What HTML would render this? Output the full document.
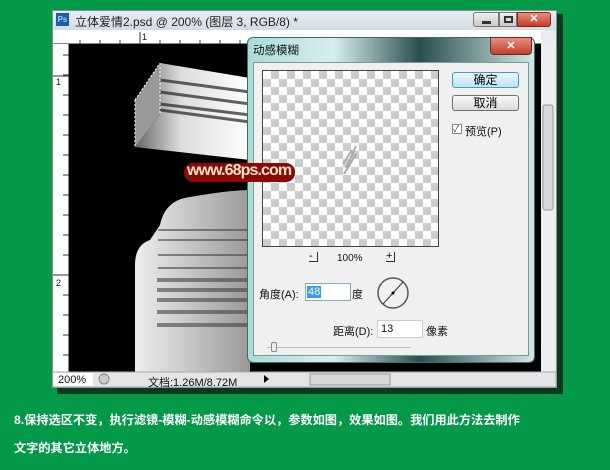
<!DOCTYPE html>
<html><head><meta charset="utf-8"><style>
*{margin:0;padding:0;box-sizing:border-box}
body{width:610px;height:470px;background:#029a48;position:relative;overflow:hidden;font-family:"Liberation Sans","Noto Sans CJK SC",sans-serif}
.a{position:absolute}
.t{font-size:11px;color:#111;white-space:nowrap}
.btn{position:absolute;border:1px solid #707070;border-radius:3px;background:linear-gradient(#f6f6f6,#dcdcdc);font-size:12px;text-align:center;line-height:14px;color:#000}
.cap{position:absolute;color:#fff;font-weight:bold;font-size:12.2px;letter-spacing:0;white-space:nowrap;font-family:"Liberation Sans","Noto Sans CJK SC",sans-serif}
</style></head><body>
<div class="a" style="left:57px;top:14px;width:506px;height:380px;background:#0b3a1f"></div>
<div class="a" style="left:52px;top:10px;width:505px;height:378px;background:#e9ecef;border:1px solid #8a8f96"></div>
<div class="a" style="left:53px;top:11px;width:503px;height:19px;background:linear-gradient(#e8eef5,#d3dbe4)"></div>
<div class="a" style="left:56px;top:13px;width:13px;height:13px;background:#1b5fa8;color:#9cd0ff;font-size:8px;font-weight:bold;line-height:13px;text-align:center">Ps</div>
<div class="a t" style="left:75px;top:13px;font-size:12px;color:#222">立体爱情2.psd @ 200% (图层 3, RGB/8) *</div>
<div class="a" style="left:473px;top:12px;width:26px;height:15px;border:1px solid #777;border-radius:3px 0 0 3px;background:linear-gradient(#f0f0f0,#c8c8c8)"><div class="a" style="left:8px;top:8px;width:9px;height:3px;background:#333"></div></div>
<div class="a" style="left:499px;top:12px;width:18px;height:15px;border:1px solid #777;background:linear-gradient(#f0f0f0,#c8c8c8)"><div class="a" style="left:4px;top:3px;width:9px;height:7px;border:2px solid #333"></div></div>
<div class="a" style="left:517px;top:12px;width:34px;height:15px;border:1px solid #7a2a20;border-radius:0 3px 3px 0;background:linear-gradient(#e98e7e,#c53c28);color:#fff;font-weight:bold;font-size:11px;text-align:center;line-height:13px">✕</div>
<div class="a" style="left:53px;top:30px;width:488px;height:14px;background:#fff;border-bottom:1px solid #888"></div>
<div class="a" style="left:53px;top:44px;width:16px;height:328px;background:#fff;border-right:1px solid #888"></div>
<div class="a t" style="left:142px;top:32px;font-size:9px">1</div>
<div class="a t" style="left:56px;top:77px;font-size:9px">1</div>
<div class="a t" style="left:56px;top:278px;font-size:9px">2</div>
<svg class="a" style="left:0;top:0" width="610" height="470">
<g stroke="#333" stroke-width="1">
<path d="M80 40v4M100 40v4M120 40v4M140 32v12M160 40v4M180 40v4M200 40v4M220 40v4M240 40v4"/>
<path d="M63 55h6M63 75h6M53 76h16M63 95h6M63 115h6M63 135h6M63 155h6M63 175h6M63 195h6M63 215h6M63 235h6M63 255h6M53 275h16M63 295h6M63 315h6M63 335h6M63 355h6"/>
</g>
<rect x="69" y="44" width="472" height="328" fill="#000"/>
<defs>
<linearGradient id="g1" x1="0" y1="0" x2="1" y2="0"><stop offset="0" stop-color="#666"/><stop offset=".4" stop-color="#ddd"/><stop offset="1" stop-color="#fff"/></linearGradient>
<linearGradient id="g2" x1="0" y1="0" x2="1" y2="0"><stop offset="0" stop-color="#eee"/><stop offset="1" stop-color="#999"/></linearGradient>
</defs>
<polygon points="160,63 250,78 250,160 135,147 160,114" fill="url(#g1)"/>
<g stroke="#222" stroke-width="3" opacity=".7"><path d="M160 80L250 92M160 92L250 104M160 104L250 115M160 110L250 122"/></g>
<polygon points="135,100 160,63 160,114 135,147" fill="#999"/>
<path d="M135 100L160 63M160 63V114M135 100V147" stroke="#fff" stroke-dasharray="2 2" fill="none"/>
<path d="M135 372V265Q135 245 150 240L160 225Q165 200 190 197Q230 190 250 190V372Z" fill="url(#g2)"/>
<g stroke="#444" opacity=".6"><path d="M158 230H250M158 240H250M158 255H250M158 268H250" stroke-width="2"/><path d="M157 280H250M157 290H250M157 300H250M157 312H250M157 325H250" stroke-width="4"/></g>
<rect x="541" y="44" width="14" height="328" fill="#eceef0"/>
<rect x="543" y="105" width="10" height="105" rx="2" fill="#d6d8da" stroke="#999"/>
<rect x="53" y="372" width="503" height="15" fill="#e3e5e7" stroke="#aaa"/>
<rect x="53" y="373" width="40" height="13" fill="#fff"/>
<circle cx="104" cy="379" r="5" fill="#ccc" stroke="#888"/>
<path d="M264 375l5 4-5 4z" fill="#000"/>
<rect x="310" y="374" width="80" height="11" fill="#d6d8da" stroke="#999"/>
</svg>
<div class="a t" style="left:58px;top:374px">200%</div>
<div class="a t" style="left:148px;top:374px">文档:1.26M/8.72M</div>
<div class="a" style="left:247px;top:37px;width:288px;height:326px;border:1px solid #3a6e6e;border-radius:6px;background:linear-gradient(90deg,#a8dcd8,#d8eeee 30%,#2a4e50 60%,#cfe8e6)"></div>
<div class="a" style="left:253px;top:62px;width:276px;height:294px;background:#f0f0f0;border:1px solid #7a9a9a"></div>
<div class="a t" style="left:253px;top:42px;font-size:11.5px">动感模糊</div>
<div class="a" style="left:490px;top:37px;width:42px;height:18px;border:1px solid #6a2a20;border-radius:0 0 4px 4px;background:linear-gradient(#e98e7e,#c0402a);color:#fff;font-weight:bold;font-size:11px;text-align:center;line-height:16px">✕</div>
<div class="a" style="left:262px;top:70px;width:177px;height:177px;border:1px solid #444;background-color:#fff;background-image:linear-gradient(45deg,#ccc 25%,transparent 25%,transparent 75%,#ccc 75%),linear-gradient(45deg,#ccc 25%,transparent 25%,transparent 75%,#ccc 75%);background-size:16px 16px;background-position:0 0,8px 8px"></div>
<svg class="a" style="left:340px;top:140px" width="20" height="40"><path d="M4 34L16 14M6 28L16 6M3 24L12 10" stroke="#aaa" stroke-width="2"/></svg>
<div class="btn" style="left:452px;top:72px;width:67px;height:16px;border-color:#3c9ed8;background:linear-gradient(#eaf6fd,#bde4f8)">确定</div>
<div class="btn" style="left:452px;top:95px;width:67px;height:16px">取消</div>
<div class="a" style="left:452px;top:124px;width:10px;height:10px;border:1px solid #888;background:#fff;font-size:9px;line-height:8px;color:#246">✓</div>
<div class="a t" style="left:465px;top:123px">预览(P)</div>
<div class="a t" style="left:309px;top:252px;width:9px;height:10px;border-right:1px solid #333;border-bottom:1px solid #333;line-height:8px">-</div>
<div class="a t" style="left:337px;top:253px;font-size:10px">100%</div>
<div class="a t" style="left:386px;top:252px;width:9px;height:10px;border-right:1px solid #333;border-bottom:1px solid #333;line-height:9px">+</div>
<div class="a t" style="left:259px;top:286px">角度(A):</div>
<div class="a" style="left:305px;top:283px;width:46px;height:18px;background:#fff;border:1px solid #8ab"></div>
<div class="a" style="left:307px;top:286px;background:#3399ff;color:#fff;font-size:11px;line-height:12px;padding:0 1px">48</div>
<div class="a t" style="left:352px;top:286px">度</div>
<svg class="a" style="left:376px;top:276px" width="34" height="34"><circle cx="17" cy="17" r="15" fill="none" stroke="#556" stroke-width="1.5"/><path d="M7 28L27 6" stroke="#333"/><circle cx="17" cy="17" r="1.5" fill="#000"/></svg>
<div class="a t" style="left:333px;top:323px">距离(D):</div>
<div class="a" style="left:377px;top:320px;width:46px;height:18px;background:#fff;border:1px solid #ccc"></div>
<div class="a t" style="left:381px;top:323px">13</div>
<div class="a t" style="left:426px;top:323px">像素</div>
<div class="a" style="left:267px;top:347px;width:144px;height:1px;background:#bbb"></div>
<div class="a" style="left:271px;top:342px;width:6px;height:10px;border:1px solid #888;border-radius:2px;background:#eee"></div>
<div class="a" style="left:184px;top:163px;width:111px;height:19px;background:#8a0a0a;border-radius:9px"></div>
<div class="a" style="left:187px;top:162px;font-size:16px;font-weight:bold;color:#ffe5c0;letter-spacing:-.9px">www.68ps.com</div>
<div class="cap" style="left:14px;top:410px">8.保持选区不变，执行滤镜-模糊-动感模糊命令以，参数如图，效果如图。我们用此方法去制作</div>
<div class="cap" style="left:14px;top:438px">文字的其它立体地方。</div>
</body></html>
